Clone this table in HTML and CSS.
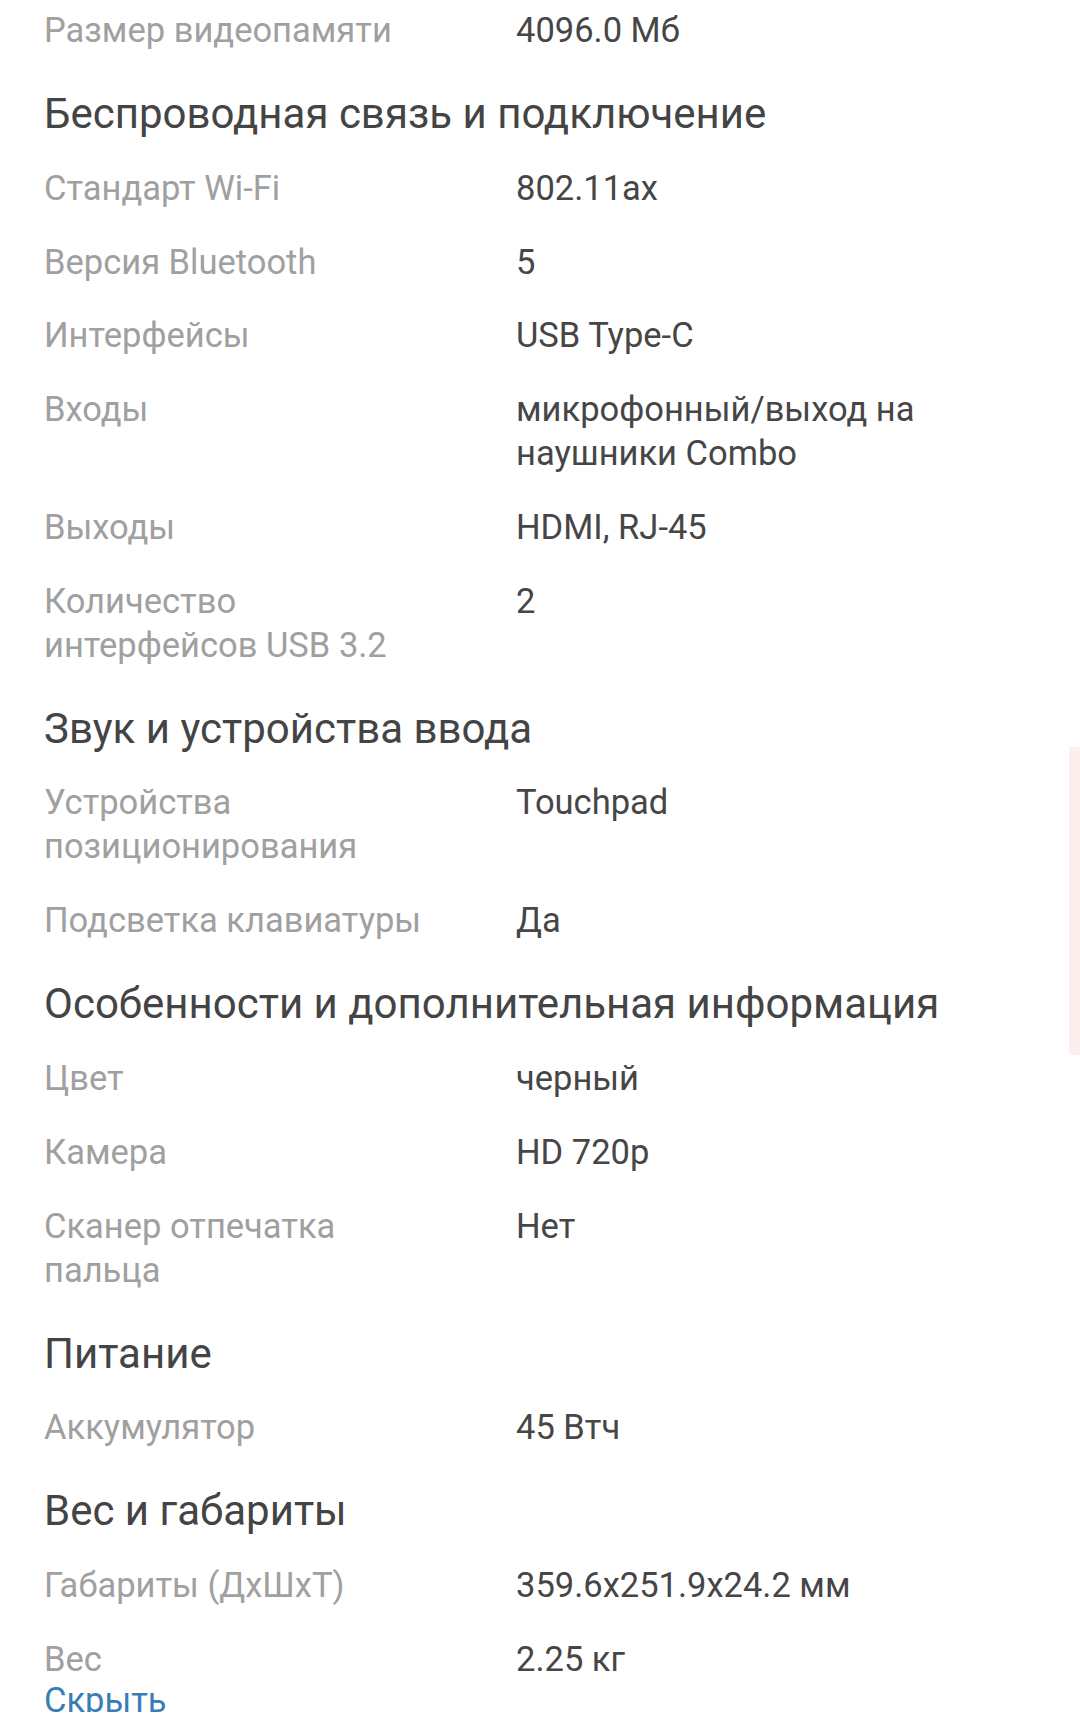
FILE: index.html
```html
<!DOCTYPE html>
<html lang="ru">
<head>
<meta charset="utf-8">
<link rel="stylesheet" href="styles.css">
</head>
<body>
<div class="specs">
  <div class="row first"><div class="label">Размер видеопамяти</div><div class="value">4096.0 Мб</div></div>

  <h2 class="heading">Беспроводная связь и подключение</h2>
  <div class="row"><div class="label">Стандарт Wi-Fi</div><div class="value">802.11ax</div></div>
  <div class="row"><div class="label">Версия Bluetooth</div><div class="value">5</div></div>
  <div class="row"><div class="label">Интерфейсы</div><div class="value">USB Type-C</div></div>
  <div class="row"><div class="label">Входы</div><div class="value">микрофонный/выход на наушники Combo</div></div>
  <div class="row"><div class="label">Выходы</div><div class="value">HDMI, RJ-45</div></div>
  <div class="row"><div class="label">Количество интерфейсов USB 3.2</div><div class="value">2</div></div>

  <h2 class="heading">Звук и устройства ввода</h2>
  <div class="row"><div class="label">Устройства позиционирования</div><div class="value">Touchpad</div></div>
  <div class="row"><div class="label">Подсветка клавиатуры</div><div class="value">Да</div></div>

  <h2 class="heading">Особенности и дополнительная информация</h2>
  <div class="row"><div class="label">Цвет</div><div class="value">черный</div></div>
  <div class="row"><div class="label">Камера</div><div class="value">HD 720p</div></div>
  <div class="row"><div class="label">Сканер отпечатка пальца</div><div class="value">Нет</div></div>

  <h2 class="heading">Питание</h2>
  <div class="row"><div class="label">Аккумулятор</div><div class="value">45 Втч</div></div>

  <h2 class="heading">Вес и габариты</h2>
  <div class="row"><div class="label">Габариты (ДхШхТ)</div><div class="value">359.6x251.9x24.2 мм</div></div>
  <div class="row"><div class="label">Вес</div><div class="value">2.25 кг</div></div>

  <a class="toggle" href="#">Скрыть</a>
</div>
<div class="scroll-hint"></div>
<div class="bottom-edge"></div>
</body>
</html>
```

FILE: styles.css
```css
html, body {
  margin: 0;
  padding: 0;
  background: #ffffff;
}

body {
  font-family: Roboto, "Noto Sans", sans-serif;
  height: 1722px;
  overflow: hidden;
  position: relative;
}

.specs {
  padding: 8px 44px 0 44px;
  display: flex;
  flex-direction: column;
}

.row {
  display: flex;
  margin-top: 29.75px;
  font-size: 34.5px;
  line-height: 44px;
}

.row.first {
  margin-top: 0;
}

.label {
  width: 398px;
  margin-right: 74px;
  flex: none;
  color: #a0a0a0;
}

.value {
  flex: 1;
  color: #464646;
  max-width: 500px;
}

.heading {
  margin: 40.1px 0 0 0;
  font-family: Roboto, "Noto Sans", sans-serif;
  font-size: 42px;
  line-height: 44px;
  font-weight: 400;
  color: #444444;
}

.toggle {
  margin-top: -3px;
  font-size: 34.5px;
  line-height: 44px;
  color: #3a7db3;
  text-decoration: none;
  align-self: flex-start;
}

.scroll-hint {
  position: absolute;
  right: 0;
  top: 747px;
  width: 11px;
  height: 308px;
  background: #fcefed;
}

.bottom-edge {
  position: absolute;
  left: 0;
  right: 0;
  bottom: 0;
  height: 10px;
  background: #ffffff;
}
```
